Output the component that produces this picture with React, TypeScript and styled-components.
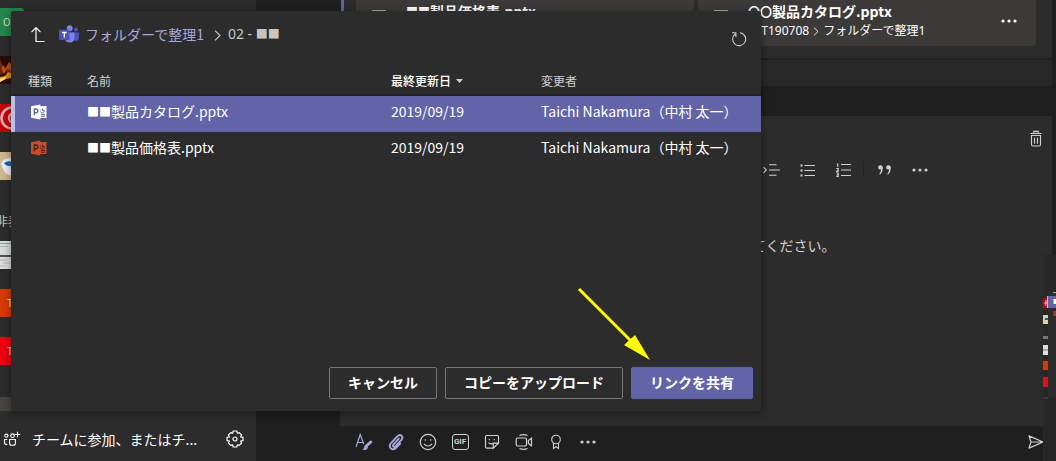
import React from 'react';
import styled, { createGlobalStyle } from 'styled-components';

const Global = createGlobalStyle`
  * { box-sizing: border-box; }
  html, body { margin: 0; padding: 0; background: #201f1f; }
  body, button, textarea {
    font-family: "Noto Sans CJK JP", "Noto Sans", sans-serif;
    font-size: 14px;
    color: #ffffff;
  }
  svg { display: block; flex: none; }
`;

const Page = styled.div`
  position: relative;
  display: flex;
  min-height: 100vh;
  overflow: hidden;
  background: #201f1f;
`;

/* ---------- sidebar ---------- */

const Sidebar = styled.aside`
  display: flex;
  flex-direction: column;
  width: 256px;
  flex: none;
  padding-top: 8px;
  background: #2d2c2c;
`;

const TeamList = styled.div`
  display: flex;
  flex-direction: column;
  gap: 20px;
`;

const Team = styled.div<{ $bg?: string; $pad?: number }>`
  width: 24px;
  height: 28px;
  overflow: hidden;
  border-radius: 0 3px 3px 0;
  background: ${(p) => p.$bg ?? 'transparent'};
  padding-left: ${(p) => p.$pad ?? 0}px;
  color: #e6d8d0;
  font-size: 10px;
  line-height: 28px;
`;

const GroupLabel = styled.div`
  margin-left: -4px;
  padding-top: 12px;
  font-size: 12px;
  line-height: 17px;
  color: #c8c6c4;
  margin-bottom: -8px;
`;

const SideScroll = styled.div`
  height: 14px;
  margin-top: 32px;
  background: #484644;
`;

const SideFooter = styled.footer`
  display: flex;
  align-items: center;
  margin-top: auto;
  height: 44px;
  padding: 0 12px 0 3px;
`;

const JoinLink = styled.a`
  display: flex;
  flex: 1;
  gap: 11px;
  align-items: center;
  color: #ffffff;
  text-decoration: none;
  line-height: 20px;
  white-space: nowrap;
`;

const IconButton = styled.button<{ $w?: number; $h?: number; $color?: string }>`
  display: flex;
  align-items: center;
  justify-content: center;
  flex: none;
  width: ${(p) => p.$w ?? 32}px;
  height: ${(p) => p.$h ?? 32}px;
  padding: 0;
  border: 0;
  background: none;
  color: ${(p) => p.$color ?? '#d2d0ce'};
`;

/* ---------- conversation ---------- */

const Main = styled.main`
  display: flex;
  flex: 1;
  flex-direction: column;
  min-width: 0;
  padding: 0 4px 0 84px;
`;

const Message = styled.section`
  margin-left: 1px;
  border-left: 3px solid #6264a7;
  border-radius: 0 0 3px 3px;
  background: #2d2c2c;
`;

const Attachments = styled.div`
  display: flex;
  gap: 4px;
  padding: 0 16px 12px 12px;
`;

const Attachment = styled.div`
  display: flex;
  flex: 1;
  height: 46px;
  padding: 2px 11px 0 16px;
  border-radius: 0 0 3px 3px;
  background: #3b3a39;
`;

const FileGlyph = styled.div`
  width: 34px;
  padding-top: 8px;
`;

const FileText = styled.div`
  flex: 1;
  line-height: 18px;
  white-space: nowrap;
`;

const FileTitle = styled.div`
  font-weight: 700;
`;

const FilePath = styled.div`
  display: flex;
  align-items: center;
  gap: 4px;
  font-family: "Noto Sans", "Noto Sans CJK JP", sans-serif;
  font-size: 12px;
  line-height: 20px;
`;

const Mask = styled.span`
  font-size: 12px;
`;

const Reply = styled.div`
  height: 28px;
  border-top: 2px solid #201f1f;
  background: #292828;
  border-radius: 0 0 3px 3px;
`;

const Compose = styled.section`
  display: flex;
  flex: 1;
  flex-direction: column;
  margin: 30px 0 0;
  border-radius: 3px 3px 0 0;
  background: #2d2c2c;
`;

const ComposeTop = styled.div`
  display: flex;
  justify-content: flex-end;
  padding-top: 6px;
`;

const FormatBar = styled.div`
  display: flex;
  align-items: center;
  padding-left: 413px;
`;

const Divider = styled.i`
  width: 1px;
  height: 16px;
  margin: 0 2px;
  background: #252424;
`;

const Editor = styled.textarea`
  flex: 1;
  margin-top: 47px;
  padding: 0 16px 0 412px;
  border: 0;
  outline: 0;
  resize: none;
  overflow: hidden;
  background: none;
  color: #d2d0ce;
  line-height: 24px;
`;

const ActionBar = styled.div`
  display: flex;
  align-items: center;
  height: 35px;
  padding: 0 0 3px 8px;
`;

const Spring = styled.span`
  flex: 1;
`;

/* ---------- shared-screen strip ---------- */

const Strip = styled.div`
  position: absolute;
  right: 0;
  top: 255px;
  bottom: 0;
  width: 13px;
  background: #282727;
`;

/* ---------- dialog ---------- */

const Dialog = styled.div`
  position: absolute;
  top: 11px;
  left: 11px;
  right: 295px;
  bottom: 50px;
  display: flex;
  flex-direction: column;
  background: #2d2c2c;
  border-radius: 2px;
  box-shadow: 0 2px 8px rgba(0, 0, 0, 0.45);
`;

const DialogHead = styled.header`
  display: flex;
  align-items: center;
  height: 56px;
  padding: 0 6px 8px 11px;
`;

const Crumbs = styled.nav`
  display: flex;
  flex: 1;
  align-items: center;
  padding-left: 5px;
  color: #c8c6c4;
  line-height: 20px;

  a {
    margin: 0 10px 0 6px;
    padding-bottom: 2px;
    color: #a6a7dc;
    text-decoration: none;
  }
`;

const CurrentFolder = styled.span`
  margin-left: 7px;
  padding-bottom: 2px;
  font-family: "Noto Sans", "Noto Sans CJK JP", sans-serif;
`;

const RefreshSlot = styled.span`
  padding-top: 8px;
`;

const Files = styled.table`
  width: 100%;
  table-layout: fixed;
  border-collapse: separate;
  border-spacing: 0;

  th, td {
    padding: 0;
    text-align: left;
    white-space: nowrap;
  }
  th {
    height: 29px;
    border-bottom: 2px solid #232222;
    font-size: 12px;
    font-weight: 400;
    line-height: 18px;
    color: #d2d0ce;
  }
  th:first-child { padding-left: 17px; }
`;

const SortHead = styled.span`
  display: flex;
  align-items: center;
  gap: 5px;
  font-weight: 500;
  color: #ffffff;
`;

const FileRow = styled.tr<{ $selected?: boolean }>`
  background: ${(p) => (p.$selected ? '#6264a7' : 'transparent')};

  td {
    height: 36px;
    padding-bottom: 6px;
    line-height: 20px;
  }
  td:first-child {
    padding: 0 0 4px 20px;
    box-shadow: ${(p) => (p.$selected ? 'inset 4px 0 #bdbde6' : 'none')};
  }
`;

const DialogFoot = styled.footer`
  display: flex;
  justify-content: flex-end;
  gap: 8px;
  margin-top: auto;
  padding: 0 8px 12px;
`;

const Button = styled.button<{ $primary?: boolean }>`
  height: 32px;
  padding: 0 18px 2px;
  border: 1px solid ${(p) => (p.$primary ? '#6264a7' : '#797775')};
  border-radius: 2px;
  background: ${(p) => (p.$primary ? '#6264a7' : '#2d2c2c')};
  font-weight: 700;
  line-height: 20px;
  white-space: nowrap;
`;

const Pointer = styled.svg`
  position: absolute;
  right: 108px;
  bottom: 50px;
`;

/* ---------- icons ---------- */

const Dots = () => (
  <svg width="16" height="4" viewBox="0 0 16 4" fill="currentColor">
    <circle cx="2" cy="2" r="1.6" /><circle cx="8" cy="2" r="1.6" /><circle cx="14" cy="2" r="1.6" />
  </svg>
);

const Chevron = ({ w = 7, h = 11 }: { w?: number; h?: number }) => (
  <svg width={w} height={h} viewBox="0 0 7 11" fill="none" stroke="currentColor" strokeWidth="1.1">
    <path d="M1 .7L6 5.5L1 10.3" />
  </svg>
);

const UpIcon = () => (
  <svg width="16" height="18" viewBox="0 0 16 18" fill="none" stroke="#ffffff" strokeWidth="1.2">
    <path d="M6 1.5V15.5H14.5M1.5 6.2L6 1.5L10.5 6.2" />
  </svg>
);

const TeamsLogo = () => (
  <svg width="20" height="20" viewBox="0 0 20 20">
    <circle cx="17" cy="4.5" r="2" fill="#4b53bc" />
    <path d="M13 7.5H20V13A3.5 3.5 0 0 1 14 15Z" fill="#4b53bc" />
    <circle cx="10.7" cy="3.2" r="2.9" fill="#7b83eb" />
    <path d="M6 7.5H15.5V13.4A5 5 0 0 1 6 14.5Z" fill="#7b83eb" />
    <rect x="0" y="4.7" width="10.5" height="10.3" rx="1" fill="#4b53bc" />
    <path d="M3 7.5H7.7M5.3 7.5V12.6" stroke="#ffffff" strokeWidth="1.3" fill="none" />
  </svg>
);

const RefreshIcon = () => (
  <svg width="16" height="16" viewBox="0 0 16 16" fill="none" stroke="currentColor" strokeWidth="1.1">
    <path d="M4.2 3A6.5 6.5 0 1 0 9 1.7M1 1.8H4.9V6" />
  </svg>
);

const PptIcon = ({ color, ink }: { color: string; ink: string }) => (
  <svg width="16" height="16" viewBox="0 0 16 16">
    <path d="M8 2H15.5V14H8Z" fill={color} />
    <path d="M9.4 5.4A2.2 2.2 0 1 0 13.4 6.6H11.4V4.6M10 10.4H14M10 12.2H14" stroke={ink} strokeWidth="1" fill="none" />
    <path d="M0 2.2L9.3 .5V15.5L0 13.8Z" fill={color} />
    <path d="M3.4 11.3V5H5A1.8 1.8 0 0 1 5 8.8H3.6" stroke={ink} strokeWidth="1.4" fill="none" />
  </svg>
);

const TrashIcon = () => (
  <svg width="12" height="17" viewBox="0 0 12 17" fill="none" stroke="currentColor" strokeWidth="1.1">
    <path d="M.5 3.5H11.5M3.8 3.3V1.4H8.2V3.3M1.5 5.5V14.5Q1.5 16 3 16H9Q10.5 16 10.5 14.5V5.5ZM4.5 7.7V13.7M7.5 7.7V13.7" />
  </svg>
);

const IndentIcon = () => (
  <svg width="17" height="12" viewBox="0 0 17 12" fill="none" stroke="currentColor" strokeWidth="1.1">
    <path d="M.5 3.2L3.3 6L.5 8.8M6 .8H13.5M6 6H17M6 11.2H13.5" />
  </svg>
);

const BulletsIcon = () => (
  <svg width="15" height="13" viewBox="0 0 15 13" fill="none" stroke="currentColor" strokeWidth="1.1">
    <path d="M4.5 1.5H15M4.5 6.5H15M4.5 11.5H15" />
    <path d="M.5 1.5H2.5M.5 6.5H2.5M.5 11.5H2.5" strokeWidth="2" />
  </svg>
);

const NumbersIcon = () => (
  <svg width="15" height="14" viewBox="0 0 15 14" fill="none" stroke="currentColor" strokeWidth="1.1">
    <path d="M5 1.5H15M5 7H15M5 12.5H15" />
    <path d="M.8 1H1.8V4M.3 5.5H2.2V7L.6 8.4H2.6M.3 10H2.2V13.4H.3M.8 11.7H2.2" />
  </svg>
);

const QuoteIcon = () => (
  <svg width="13" height="10" viewBox="0 0 13 10" fill="currentColor">
    <path d="M2.2 .3A2.1 2.1 0 0 0 2.2 4.5Q2.8 4.5 3.2 4.2Q2.9 7 1.2 9L2 9.7Q4.9 7 4.9 3.1Q4.8 .4 2.2 .3Z" />
    <path d="M10.2 .3A2.1 2.1 0 0 0 10.2 4.5Q10.8 4.5 11.2 4.2Q10.9 7 9.2 9L10 9.7Q12.9 7 12.9 3.1Q12.8 .4 10.2 .3Z" />
  </svg>
);

const FormatIcon = () => (
  <svg width="18" height="18" viewBox="0 0 18 18" fill="none" stroke="currentColor" strokeWidth="1.2">
    <path d="M1 14L5.2 1.5L8.8 11M2.6 9.5H8" />
    <path d="M15.8 9L12.4 12" strokeWidth="3" strokeLinecap="round" />
    <path d="M12.2 11.6Q9 11.6 9.2 14.8Q8.5 16.3 7 16.5Q12.8 18.2 13 13.3Z" fill="currentColor" stroke="none" />
  </svg>
);

const ClipIcon = () => (
  <svg width="16" height="18" viewBox="0 0 16 18" fill="none" stroke="currentColor" strokeWidth="1.9" strokeLinecap="round">
    <path d="M10.8 5.6L5.4 11.6C4 13.2 6 14.8 7.4 13.4L13.4 6.8C16 3.8 12.4 .2 9.5 3.2L3 10.2C-.2 13.8 4.2 18.6 7.8 15L12.2 10.5" />
  </svg>
);

const SmileIcon = () => (
  <svg width="18" height="18" viewBox="0 0 18 18" fill="none" stroke="currentColor" strokeWidth="1.2">
    <circle cx="9" cy="9" r="7.7" /><path d="M5 10.8Q9 15.2 13 10.8" />
    <circle cx="6.3" cy="7" r=".8" fill="currentColor" stroke="none" />
    <circle cx="11.7" cy="7" r=".8" fill="currentColor" stroke="none" />
  </svg>
);

const GifFrame = styled.span`
  display: flex;
  align-items: center;
  justify-content: center;
  width: 17px;
  height: 16px;
  border: 1px solid currentColor;
  border-radius: 3px;
  font: 700 8px/8px Roboto, sans-serif;
`;

const StickerIcon = () => (
  <svg width="16" height="16" viewBox="0 0 16 16" fill="none" stroke="currentColor" strokeWidth="1.2">
    <path d="M9.3 14.2H2.8Q1.5 14.2 1.5 13V2.7Q1.5 1.5 2.8 1.5H13.2Q14.5 1.5 14.5 2.7V9.2L9.3 14.2V9.2H14.5" />
    <path d="M4.5 8.6Q6.3 10.6 8.8 9.4M5.4 5V6.3M10.2 5V6.3" />
  </svg>
);

const MeetIcon = () => (
  <svg width="18" height="16" viewBox="0 0 18 16" fill="none" stroke="currentColor" strokeWidth="1.2">
    <rect x="1.2" y="4" width="10.3" height="8" rx="1.4" />
    <path d="M16.5 4.2V11.8L13.4 9.4V6.6ZM4.5 1.5Q8.5 -.2 12.5 1.5M4.5 14.5Q8.5 16.2 12.5 14.5" />
  </svg>
);

const PraiseIcon = () => (
  <svg width="12" height="16" viewBox="0 0 12 16" fill="none" stroke="currentColor" strokeWidth="1.1">
    <circle cx="6" cy="5.5" r="4.3" /><path d="M3.5 9.2V14.5L6 12.7L8.5 14.5V9.2" />
  </svg>
);

const SendIcon = () => (
  <svg width="16" height="14" viewBox="0 0 16 14" fill="none" stroke="currentColor" strokeWidth="1.2" strokeLinejoin="round">
    <path d="M1 .9L15 7L1 13.1L3 7ZM3 7H14" />
  </svg>
);

const JoinIcon = () => (
  <svg width="18" height="16" viewBox="0 0 18 16" fill="none" stroke="currentColor" strokeWidth="1.1">
    <circle cx="3.4" cy="4.7" r="1.6" /><circle cx="9.5" cy="4.7" r="1.8" />
    <path d="M4.3 8.5H1.5V11.5Q1.5 13.5 4.3 13.5M6.6 8.5H12.4V12.2Q12.4 14.2 10.4 14.2H8.6Q6.6 14.2 6.6 12.2ZM14.5 .8V6.2M11.8 3.5H17.2" />
  </svg>
);

const GearIcon = () => (
  <svg width="18" height="18" viewBox="0 0 18 18" fill="none" stroke="currentColor" strokeWidth="1.2" strokeLinejoin="round">
    <path d="M7.2 1H10.8L11.3 3.2L13.2 2.6L15.6 5L14.6 7L17 7.4V10.6L14.6 11L15.6 13L13.2 15.4L11.3 14.8L10.8 17H7.2L6.7 14.8L4.8 15.4L2.4 13L3.4 11L1 10.6V7.4L3.4 7L2.4 5L4.8 2.6L6.7 3.2Z" />
    <circle cx="9" cy="9" r="2" />
  </svg>
);

const DocOutline = () => (
  <svg width="14" height="16" viewBox="0 0 14 16" fill="none" stroke="#a8a6a4" strokeWidth="1.2">
    <path d="M.6 .6H13.4V15.4H.6Z" />
  </svg>
);

/* ---------- team pictures ---------- */

const FirePicture = () => (
  <svg width="24" height="28" viewBox="0 0 24 28">
    <rect width="24" height="28" fill="#2a0d06" />
    <path d="M0 3L2 8L5 12L8 9L11 13V18L6 16L0 19Z" fill="#6e2410" />
    <path d="M1 12L4 9L5 13L9 6L11 8V15L7 13L4 18Z" fill="#b8501c" />
    <path d="M0 21L5 20L8 16L11 17V22L6 23L0 26Z" fill="#e08a1c" />
    <path d="M0 23L6 20L5 23L0 26Z" fill="#ffe27a" />
  </svg>
);

const RedPicture = () => (
  <svg width="24" height="28" viewBox="0 0 24 28">
    <rect width="24" height="28" fill="#c4040a" />
    <circle cx="12" cy="14" r="10.5" fill="none" stroke="#dcb0b0" strokeWidth="2.6" />
    <circle cx="14" cy="14" r="5" fill="none" stroke="#dcb0b0" strokeWidth="2.4" />
  </svg>
);

const CupPicture = () => (
  <svg width="24" height="28" viewBox="0 0 24 28">
    <rect width="24" height="28" fill="#cdb890" />
    <path d="M1 12Q3 5 12 6V24Q4 23 1 12Z" fill="#e8eef4" />
    <path d="M4 11Q8 8 13 10V14Q7 15 4 11Z" fill="#1c62b4" />
  </svg>
);

const ScreenPicture = () => (
  <svg width="24" height="28" viewBox="0 0 24 28">
    <rect width="24" height="28" fill="#dcdcdc" />
    <path d="M0 2.5H24" stroke="#c08a84" />
    <path d="M0 5.5H8" stroke="#8cb4cc" />
    <path d="M0 15H24" stroke="#55504e" strokeWidth="2" />
    <path d="M0 19H7M3 22H10M0 25H6" stroke="#b4b2b0" />
  </svg>
);

const StripArt = () => (
  <svg width="13" height="150" viewBox="0 0 13 150">
    <rect x="5" y="37" width="8" height="106" fill="#2d2c2c" />
    <path d="M10 37.5H13" stroke="#a8a6a4" />
    <rect x="4" y="41" width="9" height="12" fill="#6264a7" />
    <rect x="4" y="41" width="1" height="12" fill="#bdbde6" />
    <rect x="10.5" y="44" width="2.5" height="5" fill="#ffffff" />
    <rect x="10.5" y="56" width="2.5" height="5" fill="#a83a28" />
    <rect x="0" y="43" width="4" height="10" fill="#c4040a" />
    <path d="M1 48H4M3 45V51" stroke="#e0b8b8" />
    <rect x="0" y="60" width="5" height="9" fill="#dccfae" />
    <path d="M2 64H5" stroke="#1c62b4" strokeWidth="2" />
    <rect x="0" y="81" width="5" height="3" fill="#777574" />
    <rect x="0" y="90" width="5" height="10" fill="#dedede" />
    <path d="M0 95H5" stroke="#777574" />
    <rect x="0" y="106" width="5" height="9" fill="#cf3a05" />
    <rect x="0" y="122" width="5" height="10" fill="#e80c14" />
    <path d="M0 143H5" stroke="#484644" />
  </svg>
);

const files = [
  { name: '製品カタログ.pptx', date: '2019/09/19', by: 'Taichi Nakamura（中村 太一）', selected: true },
  { name: '製品価格表.pptx', date: '2019/09/19', by: 'Taichi Nakamura（中村 太一）', selected: false },
];

export default function App() {
  return (
    <Page>
      <Global />
      <Sidebar>
        <TeamList>
          <Team $bg="#23864a" $pad={3}>O</Team>
          <Team><FirePicture /></Team>
          <Team><RedPicture /></Team>
          <Team><CupPicture /></Team>
          <GroupLabel>非表示</GroupLabel>
          <Team><ScreenPicture /></Team>
          <Team $bg="#d83b01" $pad={7}>T</Team>
          <Team $bg="#ee0011" $pad={7}>T</Team>
        </TeamList>
        <SideScroll />
        <SideFooter>
          <JoinLink href="#"><JoinIcon />チームに参加、またはチ...</JoinLink>
          <IconButton $w={18} $color="#ffffff" aria-label="設定"><GearIcon /></IconButton>
        </SideFooter>
      </Sidebar>

      <Main>
        <Message>
          <Attachments>
            <Attachment>
              <FileGlyph><DocOutline /></FileGlyph>
              <FileText>
                <FileTitle><Mask>■■</Mask>製品価格表.pptx</FileTitle>
              </FileText>
            </Attachment>
            <Attachment>
              <FileGlyph><DocOutline /></FileGlyph>
              <FileText>
                <FileTitle><Mask>〇〇</Mask>製品カタログ.pptx</FileTitle>
                <FilePath>TST190708 <Chevron w={6} h={9} /> フォルダーで整理1</FilePath>
              </FileText>
              <IconButton $h={38} $color="#ffffff" aria-label="その他"><Dots /></IconButton>
            </Attachment>
          </Attachments>
          <Reply />
        </Message>

        <Compose>
          <ComposeTop>
            <IconButton aria-label="削除"><TrashIcon /></IconButton>
          </ComposeTop>
          <FormatBar>
            <IconButton $w={36} aria-label="インデント"><IndentIcon /></IconButton>
            <IconButton $w={36} aria-label="箇条書き"><BulletsIcon /></IconButton>
            <IconButton $w={36} aria-label="段落番号"><NumbersIcon /></IconButton>
            <Divider />
            <IconButton $w={36} aria-label="引用"><QuoteIcon /></IconButton>
            <IconButton $w={36} aria-label="その他"><Dots /></IconButton>
          </FormatBar>
          <Editor aria-label="メッセージ" defaultValue="てください。" />
        </Compose>
        <ActionBar>
          <IconButton $color="#a6a7dc" aria-label="書式"><FormatIcon /></IconButton>
          <IconButton $color="#a6a7dc" aria-label="添付"><ClipIcon /></IconButton>
          <IconButton aria-label="絵文字"><SmileIcon /></IconButton>
          <IconButton><GifFrame>GIF</GifFrame></IconButton>
          <IconButton aria-label="ステッカー"><StickerIcon /></IconButton>
          <IconButton aria-label="会議"><MeetIcon /></IconButton>
          <IconButton aria-label="称賛"><PraiseIcon /></IconButton>
          <IconButton aria-label="その他"><Dots /></IconButton>
          <Spring />
          <IconButton aria-label="送信"><SendIcon /></IconButton>
        </ActionBar>
      </Main>

      <Strip><StripArt /></Strip>

      <Dialog role="dialog">
        <DialogHead>
          <IconButton aria-label="上へ"><UpIcon /></IconButton>
          <Crumbs>
            <TeamsLogo />
            <a href="#">フォルダーで整理1</a>
            <Chevron />
            <CurrentFolder>02 - <Mask>■■</Mask></CurrentFolder>
          </Crumbs>
          <RefreshSlot><IconButton aria-label="更新"><RefreshIcon /></IconButton></RefreshSlot>
        </DialogHead>
        <Files>
          <colgroup>
            <col width="76" /><col width="304" /><col width="150" /><col />
          </colgroup>
          <thead>
            <tr>
              <th>種類</th>
              <th>名前</th>
              <th>
                <SortHead>
                  最終更新日
                  <svg width="7" height="4" viewBox="0 0 7 4"><path d="M0 0H7L3.5 4Z" fill="#d2d0ce" /></svg>
                </SortHead>
              </th>
              <th>変更者</th>
            </tr>
          </thead>
          <tbody>
            {files.map((f) => (
              <FileRow key={f.name} $selected={f.selected}>
                <td>
                  <PptIcon color={f.selected ? '#ffffff' : '#d24726'} ink={f.selected ? '#6264a7' : '#2d2c2c'} />
                </td>
                <td><Mask>■■</Mask>{f.name}</td>
                <td>{f.date}</td>
                <td>{f.by}</td>
              </FileRow>
            ))}
          </tbody>
        </Files>
        <DialogFoot>
          <Button>キャンセル</Button>
          <Button>コピーをアップロード</Button>
          <Button $primary>リンクを共有</Button>
        </DialogFoot>
        <Pointer width="76" height="76" viewBox="0 0 76 76">
          <path d="M2 4L56 58" stroke="#ffff00" strokeWidth="3" />
          <path d="M73 75L47 60L58 50Z" fill="#ffff00" />
        </Pointer>
      </Dialog>
    </Page>
  );
}
